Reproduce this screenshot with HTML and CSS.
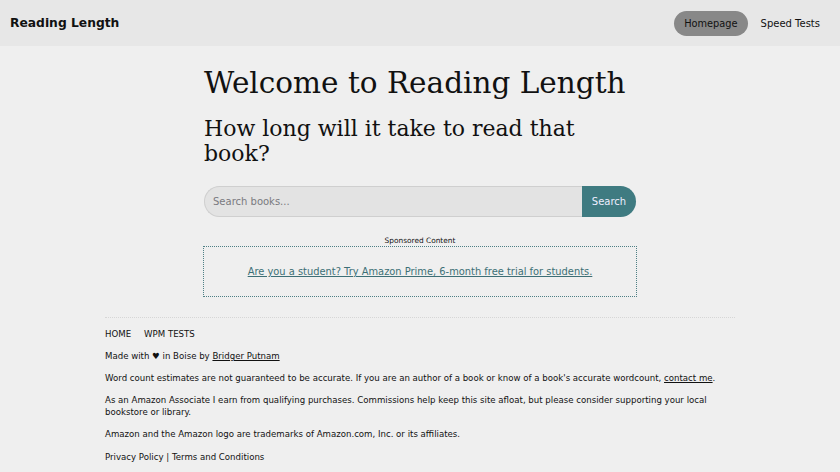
FILE: index.html
```html
<!DOCTYPE html>
<html lang="en">
<head>
<meta charset="utf-8">
<title>Reading Length</title>
<link rel="stylesheet" href="styles.css">
</head>
<body>
<header class="topbar">
  <div class="brand">Reading Length</div>
  <nav class="nav">
    <a class="nav-link active" href="#">Homepage</a>
    <a class="nav-link" href="#">Speed Tests</a>
  </nav>
</header>
<main class="main">
  <h1 class="title">Welcome to Reading Length</h1>
  <h2 class="subtitle">How long will it take to read that book?</h2>
  <form class="search">
    <input class="search-input" type="text" placeholder="Search books...">
    <button class="search-btn" type="button">Search</button>
  </form>
  <div class="sponsor-label">Sponsored Content</div>
  <div class="ad-box">
    <a class="ad-link" href="#">Are you a student? Try Amazon Prime, 6-month free trial for students.</a>
  </div>
</main>
<footer class="footer">
  <div class="footer-nav">
    <a href="#">HOME</a>
    <a href="#">WPM TESTS</a>
  </div>
  <p>Made with &#9829; in Boise by <a class="u" href="#">Bridger Putnam</a></p>
  <p>Word count estimates are not guaranteed to be accurate. If you are an author of a book or know of a book's accurate wordcount, <a class="u" href="#">contact me</a>.</p>
  <p>As an Amazon Associate I earn from qualifying purchases. Commissions help keep this site afloat, but please consider supporting your local bookstore or library.</p>
  <p>Amazon and the Amazon logo are trademarks of Amazon.com, Inc. or its affiliates.</p>
  <p>Privacy Policy | Terms and Conditions</p>
</footer>
</body>
</html>
```
FILE: styles.css
```css
* { box-sizing: border-box; }
body {
  margin: 0;
  background: #efefef;
  font-family: "DejaVu Sans", sans-serif;
  color: #111;
}
a { color: inherit; text-decoration: none; }
.topbar {
  height: 46px;
  background: #e7e7e7;
  display: flex;
  align-items: center;
  justify-content: space-between;
  padding: 0 20px 0 10px;
}
.brand {
  font-weight: bold;
  font-size: 12.3px;
  color: #111;
}
.nav { display: flex; align-items: center; gap: 13px; }
.nav-link {
  font-size: 9.8px;
  color: #111;
  padding: 6px 10px;
  border-radius: 13px;
  line-height: 13px;
}
.nav-link:last-child { padding-right: 0; padding-left: 0; font-size: 10px; }
.nav-link.active { background: #888888; margin-top: 1px; }
.main {
  width: 432px;
  margin: 0 auto;
}
.title {
  font-family: "DejaVu Serif", serif;
  font-weight: normal;
  font-size: 29.5px;
  line-height: 34px;
  margin: 20px 0 0;
}
.subtitle {
  font-family: "DejaVu Serif", serif;
  font-weight: normal;
  font-size: 22px;
  line-height: 25px;
  margin: 16px 0 0;
}
.search {
  display: flex;
  height: 31px;
  margin: 20px 0 0;
}
.search-input {
  flex: 1;
  min-width: 0;
  border: 1px solid #cfcfcf;
  border-right: none;
  border-radius: 16px 0 0 16px;
  background: #e3e3e3;
  font-family: "DejaVu Sans", sans-serif;
  font-size: 10px;
  padding: 0 8px;
  color: #333;
  outline: none;
}
.search-input::placeholder { color: #7a7a80; }
.search-btn {
  width: 54px;
  border: none;
  border-radius: 0 16px 16px 0;
  background: #3f7b81;
  color: #eef;
  font-family: "DejaVu Sans", sans-serif;
  font-size: 10px;
  padding: 0;
}
.sponsor-label {
  text-align: center;
  font-size: 7.4px;
  margin-top: 19px;
  line-height: 10px;
}
.ad-box {
  margin: 0 -1px;
  height: 51px;
  border: 1px dotted #4e7f85;
  display: flex;
  align-items: center;
  justify-content: center;
}
.ad-link {
  color: #3d6f76;
  text-decoration: underline;
  font-size: 9.9px;
}
.footer {
  width: 630px;
  margin: 20px auto 0;
  border-top: 1px dotted #d6d6d6;
  padding-top: 10px;
  font-size: 8.6px;
  line-height: 12px;
}
.footer-nav { display: flex; gap: 13px; }
.footer p { margin: 10px 0 0; }
.footer p:last-child { margin-top: 11px; }
.footer .u { text-decoration: underline; }
```
